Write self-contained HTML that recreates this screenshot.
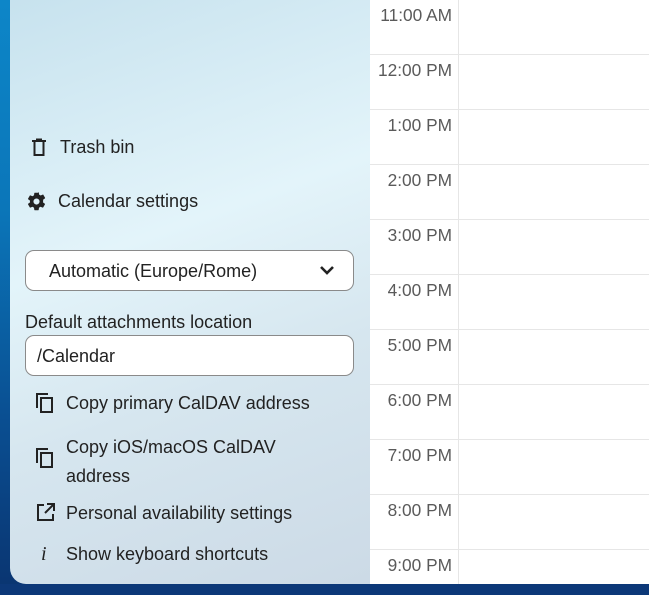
<!DOCTYPE html>
<html><head><style>
body{margin:0;width:649px;height:595px;overflow:hidden;position:relative;font-family:"Liberation Sans",sans-serif;background:linear-gradient(180deg,#0d86c8 0%,#0b76b9 35%,#0a4f92 70%,#0a3470 100%);}
.bottom{position:absolute;left:0;top:584px;width:649px;height:11px;background:#0c3878}
.panel{position:absolute;left:10px;top:0;width:360px;height:584px;border-bottom-left-radius:16px;background:linear-gradient(160deg,#c7e2ee 0%,#e3f4fa 40%,#d6e6ef 65%,#ccdae6 100%);color:#222}
.grid{position:absolute;left:370px;top:0;width:279px;height:584px;background:#fff}
.vl{position:absolute;left:88px;top:0;width:1px;height:584px;background:#e6e6e6}
.hl{position:absolute;left:0;width:279px;height:1px;background:#e6e6e6}
.t{position:absolute;right:197px;font-size:17.3px;color:#5a5a5a;white-space:nowrap}
.item{position:absolute;font-size:18px;white-space:nowrap}
svg{position:absolute}
.box{position:absolute;left:15px;width:329px;background:#fff;border:1px solid #8a8a8a;border-radius:9px;box-sizing:border-box;font-size:18px}
</style></head><body>
<div class="bottom"></div>
<div class="panel">
<svg style="left:20px;top:138px" width="18" height="19" viewBox="0 0 18 19"><path d="M2 3h14M6 1.5h6M4.5 4v13h9V4" fill="none" stroke="#222" stroke-width="2"/></svg>
<div class="item" style="left:50px;top:137px">Trash bin</div>
<svg style="left:16px;top:191px" width="21" height="21" viewBox="0 0 24 24"><path fill="#222" d="M12 15.5A3.5 3.5 0 1 1 12 8.5a3.5 3.5 0 0 1 0 7m7.43-2.530.04-.32.07-.64.07-.97s-.03-.66-.07-1l2.11-1.63c.19-.15.24-.42.12-.64l-2-3.46c-.12-.22-.39-.31-.61-.22l-2.49 1c-.52-.39-1.060-.73-1.69-.98l-.37-2.65A.506.506 0 0 0 14 2h-4c-.25 0-.46.18-.5.42l-.37 2.65c-.63.25-1.17.59-1.69.98l-2.49-1c-.22-.09-.49 0-.61.22l-2 3.46c-.13.22-.07.49.12.64L4.57 11c-.04.34-.07.67-.07 1s.03.65.07.97l-2.11 1.66c-.19.15-.25.42-.12.64l2 3.46c.12.22.39.3.61.22l2.49-1.01c.52.4 1.06.74 1.69.99l.37 2.65c.04.24.25.42.5.42h4c.25 0 .46-.18.5-.42l.37-2.65c.63-.26 1.17-.59 1.69-.99l2.49 1.01c.22.08.49 0 .61-.22l2-3.46c.12-.22.07-.49-.12-.64z"/></svg>
<div class="item" style="left:48px;top:191px">Calendar settings</div>
<div class="box" style="top:250px;height:41px;padding:10px 0 0 23px">Automatic (Europe/Rome)
<svg style="left:293px;top:14px" width="16" height="11" viewBox="0 0 16 11"><path d="M2 2l6 6 6-6" fill="none" stroke="#222" stroke-width="2.6"/></svg></div>
<div class="item" style="left:15px;top:312px">Default attachments location</div>
<div class="box" style="top:335px;height:41px;padding:10px 0 0 11px">/Calendar</div>
<svg style="left:25px;top:392px" width="20" height="22" viewBox="0 0 20 22"><path d="M2 16V2h11" fill="none" stroke="#222" stroke-width="2"/><rect x="6" y="6" width="11" height="14" fill="none" stroke="#222" stroke-width="2"/></svg>
<div class="item" style="left:56px;top:393px">Copy primary CalDAV address</div>
<svg style="left:25px;top:447px" width="20" height="22" viewBox="0 0 20 22"><path d="M2 16V2h11" fill="none" stroke="#222" stroke-width="2"/><rect x="6" y="6" width="11" height="14" fill="none" stroke="#222" stroke-width="2"/></svg>
<div class="item" style="left:56px;top:433px;line-height:29px">Copy iOS/macOS CalDAV<br>address</div>
<svg style="left:26px;top:503px" width="19" height="19" viewBox="0 0 19 19"><path d="M8 2H2v15h15v-6M11 1h7v7M18 1l-9 9" fill="none" stroke="#222" stroke-width="2"/></svg>
<div class="item" style="left:56px;top:503px">Personal availability settings</div>
<div class="item" style="left:31px;top:543px;font-family:'Liberation Serif',serif;font-style:italic;font-size:20px">i</div>
<div class="item" style="left:56px;top:544px">Show keyboard shortcuts</div>
</div>
<div class="grid">
<div class="vl"></div>
<div class="hl" style="top:54px"></div><div class="hl" style="top:109px"></div><div class="hl" style="top:164px"></div><div class="hl" style="top:219px"></div><div class="hl" style="top:274px"></div><div class="hl" style="top:329px"></div><div class="hl" style="top:384px"></div><div class="hl" style="top:439px"></div><div class="hl" style="top:494px"></div><div class="hl" style="top:549px"></div>
<div class="t" style="top:5px">11:00 AM</div>
<div class="t" style="top:60px">12:00 PM</div>
<div class="t" style="top:115px">1:00 PM</div>
<div class="t" style="top:170px">2:00 PM</div>
<div class="t" style="top:225px">3:00 PM</div>
<div class="t" style="top:280px">4:00 PM</div>
<div class="t" style="top:335px">5:00 PM</div>
<div class="t" style="top:390px">6:00 PM</div>
<div class="t" style="top:445px">7:00 PM</div>
<div class="t" style="top:500px">8:00 PM</div>
<div class="t" style="top:555px">9:00 PM</div>
</div>
</body></html>
